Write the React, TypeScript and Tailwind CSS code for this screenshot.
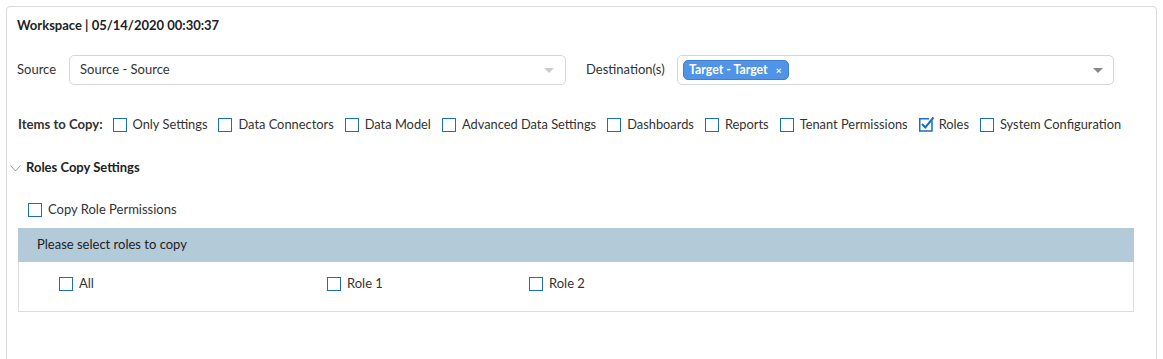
import React, { useState } from 'react';

type CopyItem = {
    label: string;
    checked: boolean;
};

const copyItems: CopyItem[] = [
    { label: 'Only Settings', checked: false },
    { label: 'Data Connectors', checked: false },
    { label: 'Data Model', checked: false },
    { label: 'Advanced Data Settings', checked: false },
    { label: 'Dashboards', checked: false },
    { label: 'Reports', checked: false },
    { label: 'Tenant Permissions', checked: false },
    { label: 'Roles', checked: true },
    { label: 'System Configuration', checked: false }
];

const roles = [
    { label: 'All', width: 'w-[268px]' },
    { label: 'Role 1', width: 'w-[202px]' },
    { label: 'Role 2', width: 'w-auto' }
];

const Checkbox = ({ checked, onClick }: { checked: boolean; onClick?: () => void }) => (
    <span onClick={onClick} className="relative inline-block w-[14px] h-[14px] shrink-0 cursor-pointer">
        {checked ? (
            <svg width="16" height="16" viewBox="0 0 16 16" className="absolute -top-[2px] left-0">
                <path d="M13 4.5 V15 H0.75 V2.75 H10" fill="none" stroke="#1a6ec0" strokeWidth="1.5" />
                <path d="M3 8 L6.3 11.5 L14.5 1.5" fill="none" stroke="#1a6ec0" strokeWidth="2" />
            </svg>
        ) : (
            <span className="block w-[14px] h-[14px] border-[1.5px] border-[#1a6ec0] bg-white" />
        )}
    </span>
);

const Caret = ({ color }: { color: string }) => (
    <svg width="10" height="5" viewBox="0 0 10 5">
        <path d="M0 0 H10 L5 5 Z" fill={color} />
    </svg>
);

const App = () => {
    const [items, setItems] = useState(copyItems);
    const [copyPerms, setCopyPerms] = useState(false);
    const [picked, setPicked] = useState<string[]>([]);

    return (
        <div className="p-[6px] bg-white text-[#333] font-['Lato','Open_Sans',sans-serif] h-[359px] overflow-hidden">
            <div className="border border-[#dadada] rounded-[4px] h-[400px] pl-[10px] pr-[22px]">
                <div className="pt-[10px] text-[13px] leading-[16px] font-bold text-[#222]">
                    Workspace | 05/14/2020 00:30:37
                </div>

                <div className="mt-[22px] flex items-center text-[13px]">
                    <span className="w-[52px]">Source</span>
                    <div className="w-[497px] h-[30px] border border-[#d6d6d6] rounded-[5px] flex items-center justify-between pl-[10px] pr-[11px]">
                        <span>Source - Source</span>
                        <Caret color="#cccccc" />
                    </div>
                    <span className="ml-[20px] w-[91px]">Destination(s)</span>
                    <div className="w-[437px] h-[30px] border border-[#d6d6d6] rounded-[5px] flex items-center justify-between pl-[5px] pr-[10px]">
                        <span className="h-[20px] flex items-center gap-[8px] bg-[#4f94e6] border border-[#3d7fcc] rounded-[5px] pl-[5px] pr-[7px] text-white font-bold text-[12.3px]">
                            Target - Target
                            <span className="text-[10px] leading-none">×</span>
                        </span>
                        <Caret color="#888888" />
                    </div>
                </div>

                <div className="mt-[32px] ml-[1px] flex items-center h-[16px] text-[12.85px] whitespace-nowrap">
                    <span className="shrink-0 font-bold text-[13.1px] mr-[10px]">Items to Copy:</span>
                    {items.map((item, i) => (
                        <label key={item.label} className="shrink-0 flex items-center gap-[6px] mr-[11px]">
                            <Checkbox
                                checked={item.checked}
                                onClick={() => setItems(items.map((it, j) => (j === i ? { ...it, checked: !it.checked } : it)))}
                            />
                            <span>{item.label}</span>
                        </label>
                    ))}
                </div>

                <div className="mt-[27px] -ml-[7px] flex items-center h-[16px] gap-[5px]">
                    <svg width="11" height="7" viewBox="0 0 11 7">
                        <path d="M0.5 0.5 L5.5 6 L10.5 0.5" fill="none" stroke="#9a9a9a" strokeWidth="1" />
                    </svg>
                    <span className="font-bold text-[13px] text-[#222]">Roles Copy Settings</span>
                </div>

                <div className="mt-[26px] ml-[11px] flex items-center h-[16px] gap-[6px] text-[13px]">
                    <Checkbox checked={copyPerms} onClick={() => setCopyPerms(!copyPerms)} />
                    <span>Copy Role Permissions</span>
                </div>

                <div className="mt-[10px] ml-[1px]">
                    <div className="h-[34px] bg-[#b3cad8] flex items-center pl-[19px] text-[13px] text-[#222]">
                        Please select roles to copy
                    </div>
                    <div className="h-[50px] border border-t-0 border-[#dcdcdc] pt-[12px] pl-[40px] flex items-start text-[13px]">
                        {roles.map(role => (
                            <label key={role.label} className={`${role.width} flex items-center gap-[6px]`}>
                                <Checkbox
                                    checked={picked.includes(role.label)}
                                    onClick={() =>
                                        setPicked(
                                            picked.includes(role.label)
                                                ? picked.filter(r => r !== role.label)
                                                : [...picked, role.label]
                                        )
                                    }
                                />
                                <span>{role.label}</span>
                            </label>
                        ))}
                    </div>
                </div>
            </div>
        </div>
    );
};

export default App;
